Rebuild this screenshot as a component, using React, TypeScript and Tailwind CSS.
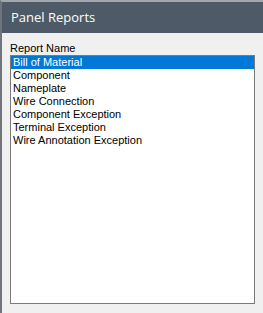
import React, { useState } from "react";

const reports = [
  "Bill of Material",
  "Component",
  "Nameplate",
  "Wire Connection",
  "Component Exception",
  "Terminal Exception",
  "Wire Annotation Exception",
];

function App() {
  const [selected, setSelected] = useState(0);

  return (
    <div className="w-[263px] h-[313px] flex flex-col bg-[#f0f0f0] border-t-2 border-t-[#a3a7ab] border-l-2 border-l-[#6f757b] overflow-hidden">
      <div className="h-[31px] shrink-0 bg-[#4e5a67] flex items-center pl-[9px]">
        <span className="text-white text-[13px] font-['Open_Sans',sans-serif] leading-none pb-[1px]">
          Panel Reports
        </span>
      </div>

      <div className="flex-1 flex flex-col pl-[8px] pr-[8px] pt-[9px] pb-[9px] font-['Liberation_Sans',Arial,sans-serif] text-[11px] text-black">
        <label className="leading-[13px] h-[13px]">Report Name</label>
        <ul className="flex-1 bg-white border border-[#7a7a7a] cursor-default select-none">
          {reports.map((r, i) => (
            <li
              key={r}
              onClick={() => setSelected(i)}
              className={`h-[13px] leading-[13px] pl-[2px] ${
                i === selected ? "bg-[#0078d7] text-white" : ""
              }`}
            >
              {r}
            </li>
          ))}
        </ul>
      </div>
    </div>
  );
}

export default App;
